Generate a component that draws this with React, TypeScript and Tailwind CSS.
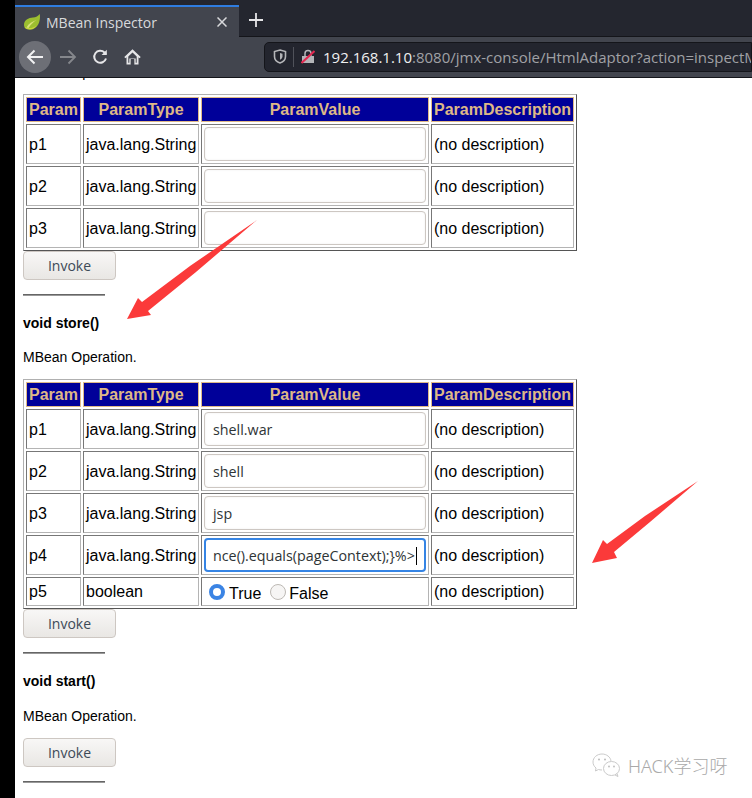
import React from "react";

const sans = "font-['Liberation_Sans',Arial,sans-serif]";
const ui = "font-['Open_Sans','Noto_Sans',sans-serif]";

function Th({ w, children }: { w: string; children: React.ReactNode }) {
  return (
    <th className={`${w} h-[25px] p-0 border border-[#deb887] bg-[#000099] text-[#deb887] text-[16px] font-bold text-center leading-none`}>
      {children}
    </th>
  );
}

function Td({ children, pl = "pl-[2px]", pt = "pt-[2px]" }: { children: React.ReactNode; pl?: string; pt?: string }) {
  return (
    <td className={`${pl} ${pt} pb-0 pr-0 border border-t-[#777] border-l-[#777] border-b-[#b4b4b4] border-r-[#b4b4b4] text-[16px] leading-[18px] text-black whitespace-nowrap`}>
      {children}
    </td>
  );
}

function TextBox({ value, focus }: { value?: string; focus?: boolean }) {
  return (
    <div
      className={`${ui} mx-auto w-[222px] h-[34px] rounded-[4px] bg-white flex items-center pt-[1px] text-[14.3px] text-[#2e3436] overflow-hidden whitespace-nowrap ${
        focus ? "border-2 border-[#3584e4] pl-[7px]" : "border border-[#cdc7c2] pl-[8px] shadow-[inset_0_0_2px_rgba(0,0,0,0.08)]"
      }`}
    >
      {value}
      {focus && <span className="inline-block w-px h-[18px] bg-black ml-px" />}
    </div>
  );
}

function Row({ p, value, focus }: { p: string; value?: string; focus?: boolean }) {
  return (
    <tr className="h-[40px]">
      <Td>{p}</Td>
      <Td>java.lang.String</Td>
      <Td pl="pl-0" pt="pt-0">
        <TextBox value={value} focus={focus} />
      </Td>
      <Td>(no description)</Td>
    </tr>
  );
}

function Table({ children }: { children: React.ReactNode }) {
  return (
    <table className="w-[554px] table-fixed border-separate border-spacing-[2px] border border-t-[#b0b0b0] border-l-[#b0b0b0] border-b-[#555] border-r-[#555]">
      <thead>
        <tr>
          <Th w="w-[55px]">Param</Th>
          <Th w="w-[116px]">ParamType</Th>
          <Th w="w-[228px]">ParamValue</Th>
          <Th w="w-[143px]">ParamDescription</Th>
        </tr>
      </thead>
      <tbody>{children}</tbody>
    </table>
  );
}

function Invoke() {
  return (
    <button className={`${ui} block w-[93px] h-[29px] rounded-[4px] border border-[#cdc7c2] bg-gradient-to-b from-[#f8f7f6] to-[#e9e7e4] text-[14px] text-[#3d4a57]`}>
      Invoke
    </button>
  );
}

function Rule({ mt = "mt-[14px]" }: { mt?: string }) {
  return <div className={`${mt} w-[82px] h-[2px] bg-[#666] border-b border-[#999]`} />;
}

function Radio({ checked }: { checked?: boolean }) {
  return checked ? (
    <span className="inline-block box-border w-[16px] h-[16px] rounded-full border-[4px] border-[#3b84e4] bg-white" />
  ) : (
    <span className="inline-block box-border w-[16px] h-[16px] rounded-full border border-[#bdb9b4] bg-[#f6f5f4]" />
  );
}

function Chrome() {
  return (
    <header className={`${ui} relative z-10 h-[78px] bg-[#24262f] flex flex-col`}>
      <div className="h-[37px] flex items-end shrink-0 border-b border-[#14151a]">
        <div className="w-[224px] h-[32px] -mb-px bg-[#42454e] border-t-2 border-[#2f7de1] flex items-center pl-[9px] pr-[12px] text-[#d8d9dc] text-[14px]">
          <svg width="16" height="16" viewBox="0 0 16 16" className="shrink-0">
            <path d="M15.800 0c0.800 6-0.800 13-7 15.200C4.500 16.600 0 15 0 11c0-5 4.500-7.200 9-7.500 2.800-0.200 5.300-1.500 6.800-3.500z" fill="#9cbf30" />
            <path d="M0.500 13c0.800 1.800 4 3 8 2 2-0.700 3.500-2 4.500-3.500-3.500 2.500-8 3.500-12.500 1.500z" fill="#c6d63c" />
            <path d="M2.500 13.500c2-4 6-6.200 10-7.500-3 2-5.800 4.500-8 8z" fill="#d9e27a" />
          </svg>
          <span className="ml-[6px] flex-1 whitespace-nowrap">MBean Inspector</span>
          <svg width="10" height="10" viewBox="0 0 10 10" className="shrink-0">
            <path d="M0.500 0.500l9 9M9.500 0.500l-9 9" stroke="#d8d9dc" strokeWidth="1.500" />
          </svg>
        </div>
        <svg width="14" height="14" viewBox="0 0 14 14" className="ml-[10px] mb-[9px]">
          <path d="M7 0v14M0 7h14" stroke="#e6e6e8" strokeWidth="1.800" />
        </svg>
      </div>
      <div className="flex-1 bg-[#42454e] border-b border-[#14151a] flex items-center pl-[4px]">
        <div className="w-[32px] h-[32px] rounded-full bg-[#6d6f76] flex items-center justify-center shrink-0">
          <svg width="18" height="16" viewBox="0 0 18 16" fill="none" stroke="#f2f2f3" strokeWidth="2">
            <path d="M17 8H2M8.500 1.500L2 8l6.500 6.500" />
          </svg>
        </div>
        <svg width="18" height="16" viewBox="0 0 18 16" fill="none" stroke="#85878c" strokeWidth="1.800" className="ml-[8px] shrink-0">
          <path d="M1 8h15M9.500 1.500L16 8l-6.500 6.500" />
        </svg>
        <svg width="16" height="16" viewBox="0 0 16 16" fill="none" stroke="#e6e6e8" strokeWidth="2" className="ml-[15px] shrink-0">
          <path d="M14 9.500A6 6 0 1 1 12.500 3.500L14 5" />
          <path d="M14.800 0.800V6H9.600z" fill="#e6e6e8" stroke="none" />
        </svg>
        <svg width="17" height="16" viewBox="0 0 17 16" className="ml-[16px] shrink-0">
          <path d="M8.500 0.300L0.300 8l1.100 1.200 1.100-1V15.500h4.300V10.500h3.400v5h4.300V8.200l1.100 1 1.100-1.200z" fill="#e6e6e8" />
          <path d="M8.500 3.500L4.300 7.400V13.800h1V9.500h6.400v4.300h1V7.400z" fill="#42454e" />
          <rect x="6.800" y="10" width="3.400" height="5.500" fill="#42454e" />
        </svg>
        <div className="ml-[123px] flex-1 min-w-0 h-[30px] mb-[1px] bg-[#23252e] border border-[#14151a] rounded-l-[5px] flex items-center overflow-hidden whitespace-nowrap">
          <svg width="14" height="15" viewBox="0 0 14 15" fill="none" className="ml-[8px] shrink-0">
            <path d="M7 1l5.500 1.500v5c0 3-2.500 5.500-5.500 6.500C4 13 1.500 10.500 1.500 7.500v-5z" stroke="#b4b5b8" strokeWidth="1.600" />
            <path d="M7 4l2.500 0.700v2.800C9.500 9 8.200 10.200 7 10.700z" fill="#b4b5b8" />
          </svg>
          <span className="ml-[6px] w-px h-[20px] bg-[#50525a] shrink-0" />
          <svg width="14" height="15" viewBox="0 0 14 15" className="ml-[7px] shrink-0">
            <path d="M1 7h12v7H1z" fill="#b4b5b8" />
            <path d="M4 7V4.500a3 3 0 0 1 6 0V7" stroke="#b4b5b8" strokeWidth="1.500" fill="none" />
            <path d="M0.500 14L13.500 2" stroke="#e22850" strokeWidth="2" />
          </svg>
          <span className="ml-[8px] mt-[2px] text-[15px] text-[#f0f0f1]">192.168.1.10</span>
          <span className="mt-[2px] text-[15px] text-[#a0a1a5]">:8080/jmx-console/HtmlAdaptor?action=inspectM</span>
        </div>
      </div>
    </header>
  );
}

function Arrow({ points }: { points: string }) {
  return <polygon points={points} fill="#fb3a3a" />;
}

export default function App() {
  return (
    <div className={`${sans} relative w-[752px] h-[798px] overflow-hidden flex bg-white`}>
      <div className="w-[15px] shrink-0 bg-black relative z-20" />
      <div className="flex-1 min-w-0">
        <Chrome />
        <main className="pl-[8px] text-[14px] leading-[16px] text-black">
          <p className="-mt-[14px]">MBean Operation.</p>
          <div className="mt-[14px]">
            <Table>
              <Row p="p1" />
              <Row p="p2" />
              <Row p="p3" />
            </Table>
          </div>
          <Invoke />
          <Rule />
          <p className="mt-[19px] font-bold">void store()</p>
          <p className="mt-[18px]">MBean Operation.</p>
          <div className="mt-[14px]">
            <Table>
              <Row p="p1" value="shell.war" />
              <Row p="p2" value="shell" />
              <Row p="p3" value="jsp" />
              <Row p="p4" value="nce().equals(pageContext);}%>" focus />
              <tr className="h-[29px]">
                <Td pt="pt-0">p5</Td>
                <Td pt="pt-0">boolean</Td>
                <Td pl="pl-[7px]" pt="pt-0">
                  <div className="flex items-center h-full">
                    <Radio checked />
                    <span className="ml-[4px] mt-[5px]">True</span>
                    <span className="ml-[9px] flex"><Radio /></span>
                    <span className="ml-[3px] mt-[5px]">False</span>
                  </div>
                </Td>
                <Td pt="pt-0">(no description)</Td>
              </tr>
            </Table>
          </div>
          <Invoke />
          <Rule />
          <p className="mt-[19px] font-bold">void start()</p>
          <p className="mt-[19px]">MBean Operation.</p>
          <div className="mt-[14px]">
            <Invoke />
          </div>
          <Rule />
        </main>
      </div>

      <svg width="752" height="798" viewBox="0 0 752 798" className="absolute left-0 top-0 pointer-events-none">
        <Arrow points="257,220 196,272 148,311 151,315 127,319 138,298 142,302 190,266" />
        <Arrow points="698,481 650,522 614,552 617,558 592,563 603,540 607,544 645,516" />
      </svg>

      <div className="absolute left-[592px] top-[752px] flex items-center">
        <svg width="30" height="28" viewBox="0 0 30 28" fill="none" stroke="#c4c4c4" strokeWidth="0.900">
          <path d="M10 2c-5 0-9 3.500-9 8 0 2.500 1.200 4.500 3 6l-0.500 3 3-1.500c1 0.300 2 0.500 3.500 0.500" />
          <path d="M10 2c4.500 0 8.500 3 9 7" />
          <ellipse cx="19.500" cy="16.500" rx="8" ry="7" />
          <path d="M25 21.500l1 3-3-1.500" />
          <circle cx="7" cy="7.500" r="1" fill="#bbb" stroke="none" />
          <circle cx="13" cy="7.500" r="1" fill="#bbb" stroke="none" />
          <circle cx="17" cy="14.500" r="0.900" fill="#bbb" stroke="none" />
          <circle cx="22" cy="14.500" r="0.900" fill="#bbb" stroke="none" />
        </svg>
        <span className="ml-[6px] text-[18px] leading-none text-[#a9a9a9] font-['Noto_Sans','Noto_Sans_CJK_SC',sans-serif] font-light whitespace-nowrap">
          HACK学习呀
        </span>
      </div>
    </div>
  );
}
